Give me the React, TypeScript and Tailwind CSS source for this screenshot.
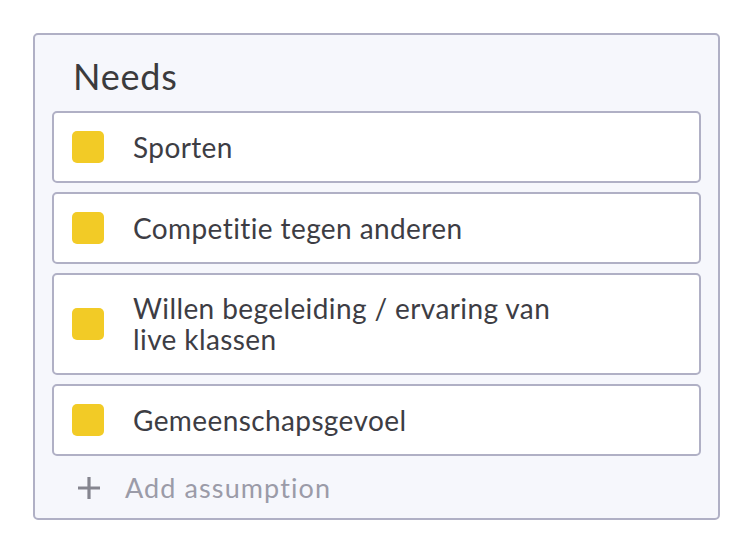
import React from "react";

const items: string[][] = [
  ["Sporten"],
  ["Competitie tegen anderen"],
  ["Willen begeleiding / ervaring van", "live klassen"],
  ["Gemeenschapsgevoel"],
];

export default function App() {
  return (
    <div
      className="w-[752px] h-[552px] bg-white pt-[33px] pl-[33px] [font-variant-ligatures:none]"
      style={{ fontFamily: "Lato, 'Open Sans', sans-serif" }}
    >
      <div className="w-[687px] h-[487px] border-2 border-[#b0b0c5] rounded-[5px] bg-[#f6f7fc] px-[17px] pt-[20px]">
        <div className="pl-[21px] text-[36px] leading-[43px] tracking-[0.8px] text-[#3b3b3d] h-[56px]">Needs</div>
        <div className="flex flex-col gap-[9px]">
          {items.map((lines, i) => (
            <div
              key={i}
              className="flex items-center border-2 border-[#b0b0c5] rounded-[5px] bg-white py-[18px] pl-[18px]"
            >
              <div className="w-[32px] h-[32px] rounded-[5px] bg-[#f2cb26] shrink-0" />
              <div className="ml-[29px] text-[28px] leading-[31px] tracking-[0.4px] text-[#3d3d44]">
                {lines.map((l, j) => (
                  <React.Fragment key={j}>
                    {j > 0 && <br />}
                    {l}
                  </React.Fragment>
                ))}
              </div>
            </div>
          ))}
        </div>
        <div className="flex items-center mt-[17px] pl-[25px] text-[#9b9ba8]">
          <svg width="24" height="24" viewBox="0 0 24 24" className="shrink-0">
            <path d="M12 1v22M1 12h22" stroke="#85858f" strokeWidth="3.2" />
          </svg>
          <span className="ml-[24px] text-[27px] leading-[30px] tracking-[1.1px]">Add assumption</span>
        </div>
      </div>
    </div>
  );
}
